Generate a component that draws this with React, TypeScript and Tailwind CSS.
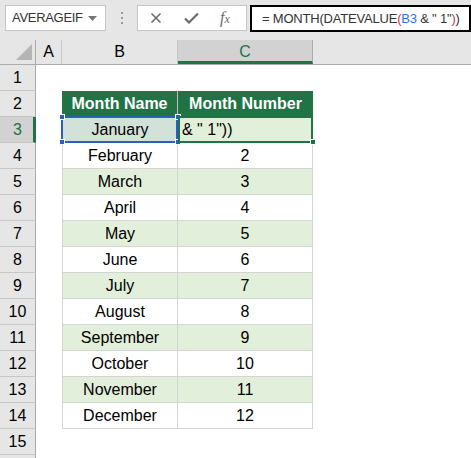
import React from 'react'

const months = [
  'January',
  'February',
  'March',
  'April',
  'May',
  'June',
  'July',
  'August',
  'September',
  'October',
  'November',
  'December',
]

const font = { fontFamily: '"Liberation Sans", Arial, sans-serif' }

function FormulaBar() {
  return (
    <div className="flex h-[40px] items-start bg-[#e6e6e6] pt-[5px]">
      <div className="ml-[5px] flex h-[26px] w-[101px] shrink-0 items-center justify-between border border-[#c6c6c6] bg-white pl-[6px] pr-[8px] text-[13px] tracking-[-0.3px] text-[#333]">
        <span>AVERAGEIF</span>
        <svg width="9" height="5" viewBox="0 0 9 5">
          <path d="M0 0h9L4.5 5z" fill="#777" />
        </svg>
      </div>
      <div className="flex h-[26px] w-[31px] shrink-0 flex-col items-center justify-center gap-[3px]">
        <span className="h-[2px] w-[2px] bg-[#9a9a9a]" />
        <span className="h-[2px] w-[2px] bg-[#9a9a9a]" />
        <span className="h-[2px] w-[2px] bg-[#9a9a9a]" />
      </div>
      <div className="flex h-[26px] w-[110px] shrink-0 items-center border border-[#c6c6c6] bg-white">
        <svg className="ml-[12px]" width="12" height="12" viewBox="0 0 12 12">
          <path d="M1.5 1.5l9 9M10.5 1.5l-9 9" stroke="#6b6b6b" strokeWidth="1.6" />
        </svg>
        <svg className="ml-[22px]" width="15" height="12" viewBox="0 0 15 12">
          <path d="M1 6.5l4 4L14 1.5" stroke="#6b6b6b" strokeWidth="2.2" fill="none" />
        </svg>
        <span
          className="ml-[21px] text-[16px] italic leading-none text-[#6b6b6b]"
          style={{ fontFamily: '"Liberation Serif", serif' }}
        >
          f<span className="text-[12px]">x</span>
        </span>
      </div>
      <div className="ml-[3px] flex h-[27px] min-w-0 flex-1 items-center overflow-hidden border-2 border-black bg-white pl-[10px] text-[13px] tracking-[-0.2px] text-[#333]">
        <span className="whitespace-nowrap">
          = MONTH(DATEVALUE<span className="text-[#d1334a]">(</span>
          <span className="text-[#2e75d6]">B3</span> &amp; " 1"<span className="text-[#d1334a]">)</span>)
        </span>
      </div>
    </div>
  )
}

function ColumnHeaders() {
  return (
    <div className="flex h-[25px] border-b border-[#ababab] bg-[#e6e6e6] text-[16px] text-black">
      <div className="relative w-[36px] border-r border-[#ababab]">
        <svg className="absolute bottom-[4px] right-[3px]" width="16" height="16" viewBox="0 0 16 16">
          <path d="M16 0V16H0z" fill="#b4b4b4" />
        </svg>
      </div>
      <div className="flex w-[26px] items-center justify-center border-r border-[#c6c6c6]">A</div>
      <div className="flex w-[116px] items-center justify-center border-r border-[#c6c6c6]">B</div>
      <div className="flex w-[135px] items-center justify-center border-b-[3px] border-r border-b-[#217346] border-r-[#ababab] bg-[#d2d2d2] pt-[2px] text-[#217346]">
        C
      </div>
      <div className="flex-1" />
    </div>
  )
}

function RowHead({ n, active }: { n?: number; active?: boolean }) {
  return (
    <div
      className={`flex w-[36px] items-center justify-center border-b border-[#c6c6c6] text-[16px] ${
        active ? 'border-r-[3px] border-r-[#217346] bg-[#d2d2d2] pl-[2px] text-[#217346]' : 'border-r border-r-[#ababab] bg-[#e6e6e6] text-black'
      }`}
    >
      {n}
    </div>
  )
}

function Handle({ className }: { className: string }) {
  return <span className={`absolute h-[6px] w-[6px] border border-white bg-[#2b5fbf] ${className}`} />
}

export default function App() {
  return (
    <div className="h-[458px] w-[471px] overflow-hidden bg-white" style={font}>
      <FormulaBar />
      <ColumnHeaders />

      <div className="flex h-[26px]">
        <RowHead n={1} />
        <div className="flex-1" />
      </div>

      <div className="flex h-[26px]">
        <RowHead n={2} />
        <div className="w-[26px]" />
        <div className="flex w-[116px] items-center justify-center border-r border-[#bfbfbf] bg-[#217346] text-[16px] font-bold text-white">
          Month Name
        </div>
        <div className="flex w-[135px] items-center justify-center bg-[#217346] text-[16px] font-bold text-white">
          Month Number
        </div>
        <div className="flex-1" />
      </div>

      {months.map((m, i) => {
        const row = i + 3
        const shaded = i % 2 === 0
        const bg = shaded ? 'bg-[#e2efda]' : 'bg-white'
        if (row === 3) {
          return (
            <div key={m} className="flex h-[26px]">
              <RowHead n={row} active />
              <div className="w-[26px]" />
              <div className="relative flex w-[116px] items-center justify-center border-b border-[#d4d4d4] bg-[#d3e2d8] text-[16px] text-black">
                January
                <span className="absolute -left-[1px] -top-[1px] h-[27px] w-[117px] border-2 border-[#2b5fbf]" />
                <Handle className="-left-[3px] -top-[3px]" />
                <Handle className="-right-[3px] -top-[3px]" />
                <Handle className="-bottom-[3px] -left-[3px]" />
                <Handle className="-bottom-[3px] -right-[3px]" />
              </div>
              <div className="relative flex w-[135px] items-center border-b border-[#d4d4d4] bg-[#e2efda] pl-[4px] text-[16px] text-black">
                &amp; " 1"))
                <span className="absolute -top-[1px] left-0 h-[27px] w-[135px] border-2 border-[#217346]" />
                <span className="absolute -bottom-[3px] -right-[3px] h-[6px] w-[6px] border border-white bg-[#217346]" />
              </div>
              <div className="flex-1" />
            </div>
          )
        }
        return (
          <div key={m} className="flex h-[26px]">
            <RowHead n={row} />
            <div className="w-[26px]" />
            <div className={`flex w-[116px] items-center justify-center border-b border-l border-r border-[#d4d4d4] text-[16px] text-black ${bg}`}>
              {m}
            </div>
            <div className={`flex w-[135px] items-center justify-center border-b border-r border-[#d4d4d4] text-[16px] text-black ${bg}`}>
              {i + 1}
            </div>
            <div className="flex-1" />
          </div>
        )
      })}

      <div className="flex h-[26px]">
        <RowHead n={15} />
        <div className="flex-1" />
      </div>
      <div className="flex h-[26px]">
        <RowHead />
        <div className="flex-1" />
      </div>
    </div>
  )
}
